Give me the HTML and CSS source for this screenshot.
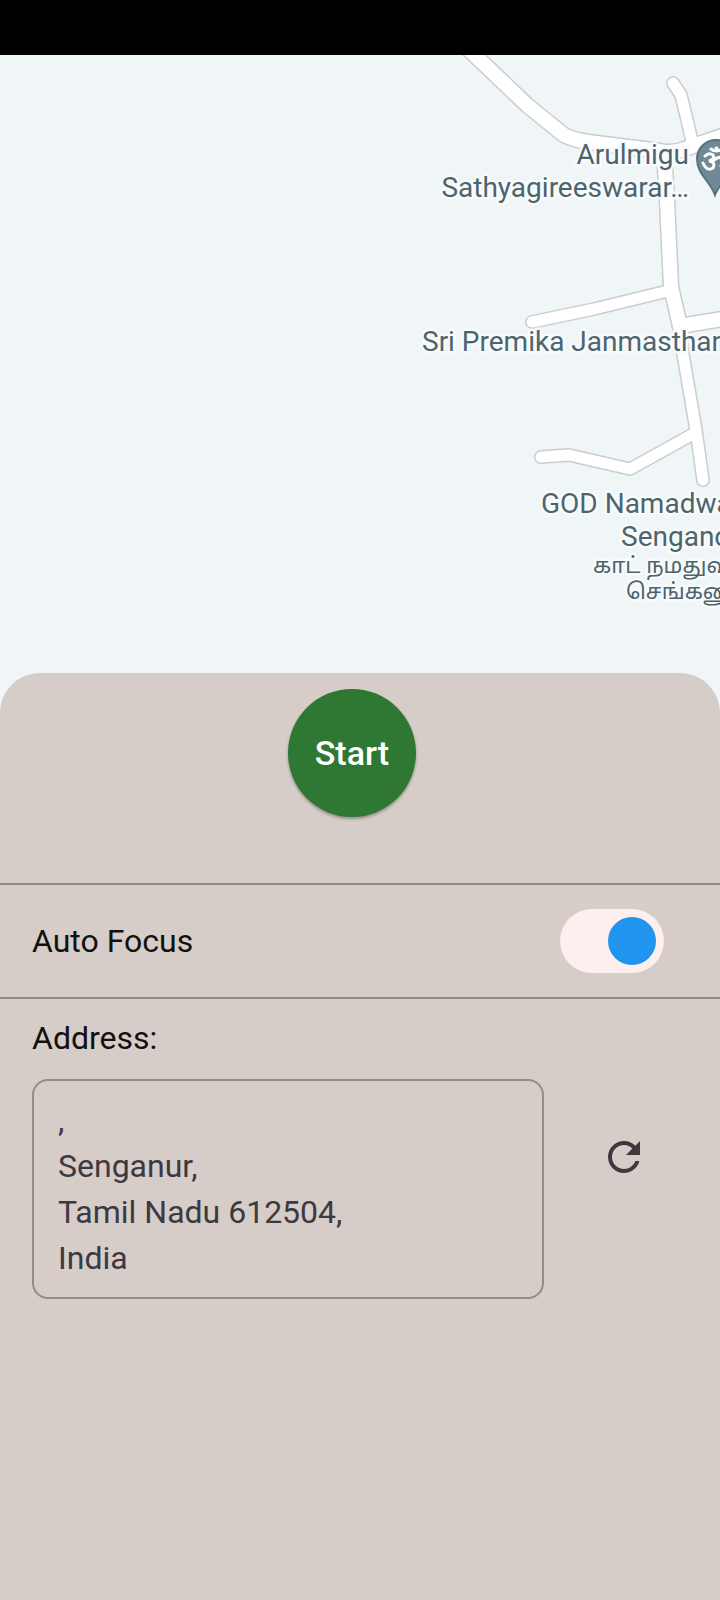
FILE: index.html
```html
<!DOCTYPE html>
<html lang="en">
<head>
<meta charset="utf-8">
<meta name="viewport" content="width=device-width, initial-scale=1">
<title>Start</title>
<link rel="stylesheet" href="styles.css">
</head>
<body>
<div class="app">
  <div class="status-bar"></div>
  <svg class="map" viewBox="0 55 720 660" preserveAspectRatio="xMaxYMin slice" role="img" aria-label="Map">
    <defs>
      <g id="wide-roads">
        <path d="M463 44L528 106L564 135Q574 140 588 142L660 151Q674 154 690 147L740 130"/>
        <path d="M664 152L667 200L671 287L680 326L740 316"/>
      </g>
      <g id="lanes">
        <path d="M673 83L681 95L693 145"/>
        <path d="M532 322L594 309L668 291"/>
        <path d="M678 322L684 360L696 430L703 480"/>
        <path d="M541 457L569 455L630 469L695 433"/>
      </g>
    </defs>
    <use href="#wide-roads" class="road wide edge"/>
    <use href="#lanes" class="road lane edge"/>
    <use href="#wide-roads" class="road wide"/>
    <use href="#lanes" class="road lane"/>
    <g class="pin">
      <path class="pin-body" d="M715 195C710 181 697 174 697 159A19 19 0 0 1 735 159C735 174 720 181 715 195Z"/>
      <path class="pin-sign" d="M705 156Q709 152 713 155Q715 159 709 161Q716 162 713 168Q707 172 703 163M713 161Q719 155 724 159Q727 165 721 166M711 149Q716 153 722 149M716 148h1"/>
    </g>
    <g class="place">
      <text x="689" y="164" text-anchor="end">Arulmigu</text>
      <text x="689" y="197" text-anchor="end">Sathyagireeswarar…</text>
      <text x="422" y="351">Sri Premika Janmasthan</text>
      <text x="541" y="513">GOD Namadwaar</text>
      <text x="621" y="546">Senganoor</text>
      <text class="tamil" x="593" y="573" lang="ta">காட் நமதுவார்</text>
      <text class="tamil" x="626" y="599" lang="ta">செங்கனூர்</text>
    </g>
  </svg>
  <main class="sheet">
    <div class="start-row">
      <button class="start" type="button">Start</button>
    </div>
    <div class="focus-row">
      <label for="auto-focus">Auto Focus</label>
      <input class="switch" id="auto-focus" type="checkbox" role="switch" checked>
    </div>
    <section class="address-section">
      <h2 class="heading">Address:</h2>
      <div class="address-row">
        <address class="address">,<br>Senganur,<br>Tamil Nadu 612504,<br>India</address>
        <button class="refresh" type="button" aria-label="Refresh address">
          <svg viewBox="0 0 24 24" aria-hidden="true"><path d="M17.65 6.35C16.2 4.9 14.21 4 12 4c-4.42 0-7.99 3.58-7.99 8s3.57 8 7.99 8c3.73 0 6.84-2.55 7.73-6h-2.08c-.82 2.33-3.04 4-5.65 4-3.31 0-6-2.69-6-6s2.69-6 6-6c1.66 0 3.14.69 4.22 1.78L13 11h7V4l-2.35 2.35z"/></svg>
        </button>
      </div>
    </section>
  </main>
</div>
</body>
</html>
```
FILE: styles.css
```css
* { box-sizing: border-box; }

body {
  margin: 0;
  background: #d6ccc8;
  color: #111;
  font: 400 32px/46px Roboto, sans-serif;
}

.app {
  display: flex;
  flex-direction: column;
  min-height: 100vh;
}

.status-bar { height: 55px; background: #000; }

.map {
  display: block;
  width: 100%;
  height: 660px;
  background: #f0f5f7;
}

.road {
  fill: none;
  stroke: #fff;
  stroke-linecap: round;
  stroke-linejoin: round;
}
.road.wide { stroke-width: 14px; }
.road.lane { stroke-width: 11px; }
.road.edge { stroke: #c9cdd0; }
.road.wide.edge { stroke-width: 17px; }
.road.lane.edge { stroke-width: 14px; }

.pin-body { fill: #6f8a96; stroke: #58717c; stroke-width: 2px; }
.pin-sign {
  fill: none;
  stroke: #fff;
  stroke-width: 3px;
  stroke-linecap: round;
}

.place {
  fill: #4d646e;
  stroke: #f8fbfb;
  stroke-width: 5px;
  stroke-linejoin: round;
  paint-order: stroke;
  font-size: 28px;
}
.tamil { font-size: 22px; font-family: "Noto Sans Tamil", "Noto Sans", sans-serif; }

.sheet {
  position: relative;
  flex: 1;
  margin-top: -42px;
  border-radius: 40px 40px 0 0;
  background: #d6ccc8;
}

.start-row {
  display: flex;
  justify-content: center;
  padding: 16px 16px 66px 0;
}

.start {
  width: 128px;
  height: 128px;
  padding: 0;
  border: 0;
  border-radius: 50%;
  background: #2e7834;
  box-shadow: 0 2px 3px rgb(0 0 0 / 30%);
  color: #fff;
  font: 500 34px/46px Roboto, sans-serif;
}

.focus-row {
  display: flex;
  align-items: center;
  justify-content: space-between;
  padding: 24px 56px 24px 32px;
  border: solid #8f8a87;
  border-width: 2px 0;
}

.switch {
  appearance: none;
  display: flex;
  justify-content: flex-end;
  width: 104px;
  height: 64px;
  margin: 0;
  padding: 8px;
  border-radius: 32px;
  background: #fdefed;
}
.switch::before {
  content: "";
  width: 48px;
  height: 48px;
  border-radius: 50%;
  background: #2094ee;
}
.switch:not(:checked) { justify-content: flex-start; }

.address-section { padding: 16px 16px 16px 32px; }

.heading { margin: 0 0 18px; font: inherit; }

.address-row { display: flex; align-items: flex-start; }

.address {
  flex: 1;
  padding: 16px 24px;
  border: 2px solid #8f8e8b;
  border-radius: 16px;
  color: #3c393f;
  font-style: normal;
}

.refresh {
  display: grid;
  place-items: center;
  width: 160px;
  height: 156px;
  padding: 0;
  border: 0;
  background: none;
}
.refresh svg { width: 48px; height: 48px; fill: #3c393f; }
```
